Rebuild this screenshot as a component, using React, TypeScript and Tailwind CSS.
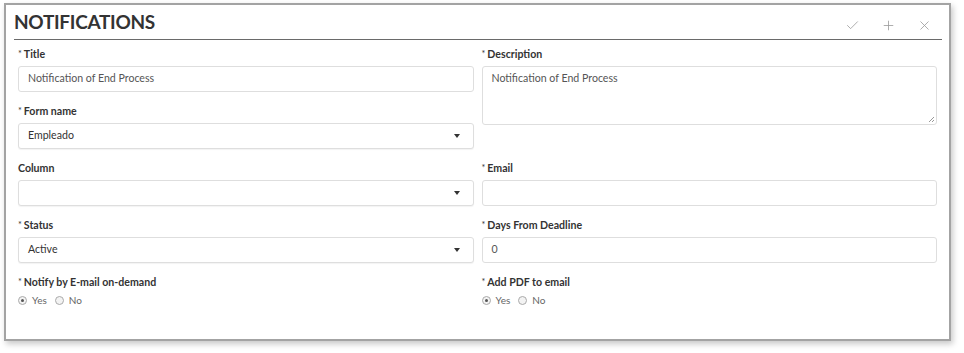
import React from 'react';
import { Check, Plus, X } from 'lucide-react';

const font = { fontFamily: 'Lato, "Open Sans", sans-serif' };

const Label = ({ text, required = true }: { text: string; required?: boolean }) => (
  <div className="h-[16px] leading-[16px] mb-[4px] text-[10.6px] font-bold text-[#333]">
    {required && <span className="text-[9px] align-top mr-[2px] font-normal">*</span>}
    {text}
  </div>
);

const TextInput = ({ value = '' }: { value?: string }) => (
  <div className="h-[26px] border border-[#dedede] rounded-[3px] bg-white px-[9px] flex items-center text-[10.6px] text-[#555]">
    {value}
  </div>
);

const SelectInput = ({ value = '' }: { value?: string }) => (
  <div className="h-[26px] border border-[#dedede] rounded-[3px] bg-white pl-[9px] pr-[13px] flex items-center justify-between text-[10.6px] text-[#333] shadow-[0_1px_1px_rgba(0,0,0,0.05)]">
    <span>{value}</span>
    <span className="w-0 h-0 border-l-[3.5px] border-r-[3.5px] border-t-[4px] border-l-transparent border-r-transparent border-t-[#333]" />
  </div>
);

const Radio = ({ checked, label }: { checked?: boolean; label: string }) => (
  <label className="flex items-center gap-[5px] mr-[8px]">
    <span className="w-[9px] h-[9px] rounded-full border border-[#aaa] bg-[#f3f3f3] flex items-center justify-center">
      {checked && <span className="w-[3px] h-[3px] rounded-full bg-[#555]" />}
    </span>
    <span>{label}</span>
  </label>
);

const RadioGroup = () => (
  <div className="flex items-center h-[12px] text-[10px] text-[#666]">
    <Radio checked label="Yes" />
    <Radio label="No" />
  </div>
);

export default function App() {
  return (
    <div className="w-[964px] h-[353px] bg-white pt-[3px] pl-[4px]" style={font}>
      <div className="w-[947px] h-[338px] border-2 border-[#a3a3a3] bg-white shadow-[2px_3px_6px_rgba(0,0,0,0.22)]">
        {/* Header */}
        <div className="h-[35px] ml-[8px] mr-[7px] border-b border-[#6a6a6a] flex items-center justify-between">
          <h1 className="text-[19px] font-bold text-[#333] tracking-[-0.3px] mt-[1px]">NOTIFICATIONS</h1>
          <div className="flex items-center gap-[21px] mr-[10px] mt-[6px] text-[#9b9b9b]">
            <Check size={15} strokeWidth={1.3} />
            <Plus size={15} strokeWidth={1.3} />
            <X size={15} strokeWidth={1.3} />
          </div>
        </div>

        {/* Form */}
        <div className="grid grid-cols-2 gap-x-[8px] gap-y-[11px] px-[12px] pt-[6px]">
          <div>
            <Label text="Title" />
            <TextInput value="Notification of End Process" />
          </div>
          <div className="row-span-2">
            <Label text="Description" />
            <div className="relative h-[59px] border border-[#dedede] rounded-[3px] px-[9px] pt-[4px] text-[10.6px] text-[#555]">
              Notification of End Process
              <svg className="absolute right-[1px] bottom-[1px]" width="7" height="7" viewBox="0 0 7 7">
                <path d="M6 1 L1 6 M6 4 L4 6" stroke="#999" strokeWidth="1" />
              </svg>
            </div>
          </div>
          <div>
            <Label text="Form name" />
            <SelectInput value="Empleado" />
          </div>
          <div>
            <Label text="Column" required={false} />
            <SelectInput />
          </div>
          <div>
            <Label text="Email" />
            <TextInput />
          </div>
          <div>
            <Label text="Status" />
            <SelectInput value="Active" />
          </div>
          <div>
            <Label text="Days From Deadline" />
            <TextInput value="0" />
          </div>
          <div>
            <Label text="Notify by E-mail on-demand" />
            <RadioGroup />
          </div>
          <div>
            <Label text="Add PDF to email" />
            <RadioGroup />
          </div>
        </div>
      </div>
    </div>
  );
}
